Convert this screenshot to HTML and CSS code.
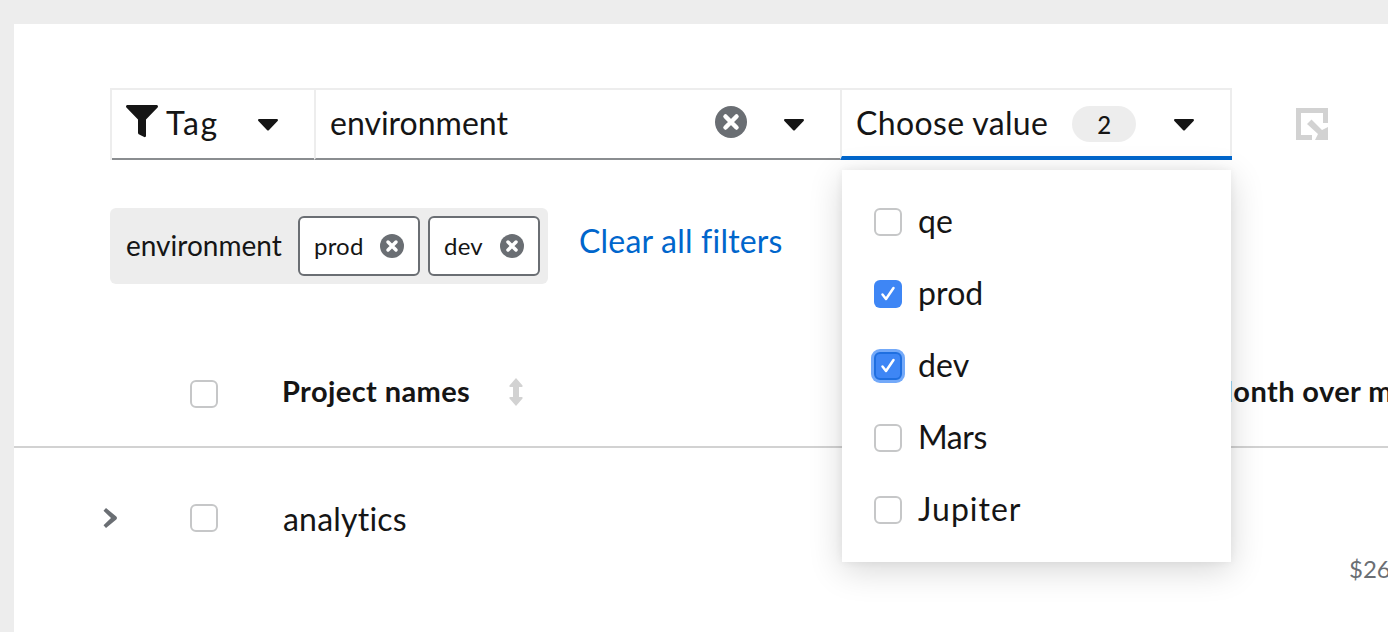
FILE: index.html
```html
<!DOCTYPE html>
<html lang="en">
<head>
<meta charset="utf-8">
<title>Filter</title>
<link rel="stylesheet" href="styles.css">
</head>
<body>
<main class="panel">
  <div class="toolbar-row">
    <div class="toolbar">
      <div class="seg seg-type">
        <svg class="funnel" viewBox="0 0 32 34"><path d="M0 1.500C0 .7.700 0 1.500 0h29c.8 0 1.500.7 1.500 1.500 0 .4-.2.8-.4 1L20 14.500V31c0 .8-1 1.500-1.800 1.100l-5-2.500c-.7-.4-1.200-1-1.200-1.800V14.500L.4 2.500C.2 2.300 0 1.900 0 1.500z"/></svg>
        <span class="seg-text tag">Tag</span>
        <svg class="caret caret-type" viewBox="0 0 20 12"><path d="M1.200 0h17.600c1 0 1.500 1.200.8 1.900l-8.800 9.300c-.4.500-1.200.5-1.600 0L.4 1.900C-.3 1.200.2 0 1.200 0z"/></svg>
      </div>
      <div class="seg seg-key">
        <span class="seg-text">environment</span>
        <svg class="clear-big" viewBox="0 0 32 32"><circle cx="16" cy="16" r="16"/><path class="x" d="M10.500 10.500l11 11m0-11l-11 11"/></svg>
        <svg class="caret caret-key" viewBox="0 0 20 12"><path d="M1.200 0h17.600c1 0 1.500 1.200.8 1.900l-8.800 9.300c-.4.500-1.200.5-1.600 0L.4 1.900C-.3 1.200.2 0 1.200 0z"/></svg>
      </div>
      <div class="seg seg-value">
        <span class="seg-text choose">Choose value</span>
        <span class="count">2</span>
        <svg class="caret caret-value" viewBox="0 0 20 12"><path d="M1.200 0h17.600c1 0 1.500 1.200.8 1.900l-8.800 9.300c-.4.500-1.200.5-1.600 0L.4 1.900C-.3 1.200.2 0 1.200 0z"/></svg>
      </div>
    </div>
    <svg class="export" viewBox="0 0 32 32"><path d="M0 0h32v15h-5V5H5v22h11v5H0z"/><path d="M11 16l4.500-4.500 10.500 10.500 6-3V32H19l3-6z"/></svg>
  </div>

  <div class="chips-row">
    <div class="chip-group">
      <span class="chip-label">environment</span>
      <span class="chip chip-prod">prod<svg class="chip-x" viewBox="0 0 24 24"><circle cx="12" cy="12" r="12"/><path class="x" d="M8 8l8 8m0-8l-8 8"/></svg></span>
      <span class="chip chip-dev">dev<svg class="chip-x" viewBox="0 0 24 24"><circle cx="12" cy="12" r="12"/><path class="x" d="M8 8l8 8m0-8l-8 8"/></svg></span>
    </div>
    <a class="clear-all">Clear all filters</a>
  </div>

  <div class="thead">
    <span class="check"></span>
    <span class="th-name">Project names</span>
    <svg class="sort" viewBox="0 0 16 28"><path d="M8 0l6.500 7.500c.4.500.1 1.500-.7 1.500H11v10h2.800c.8 0 1.100 1 .7 1.500L8 28l-6.500-7.500c-.4-.5-.1-1.500.7-1.500H5V9H2.200c-.8 0-1.100-1-.7-1.500z"/></svg>
    <span class="th-month">Month over month</span>
  </div>

  <div class="tbody-row">
    <svg class="chevron" viewBox="0 0 14 20"><path d="M3 0l10.300 8.500c.9.800.9 2.200 0 3L3 20l-2.500-2.800L8 10 .5 2.800z"/></svg>
    <span class="check"></span>
    <span class="td-name">analytics</span>
    <span class="td-cost">$26</span>
  </div>

  <div class="menu">
    <label class="item"><span class="check"></span><span class="item-text">qe</span></label>
    <label class="item"><span class="check on"><svg viewBox="0 0 20 20"><path d="M4.500 10.500l3.500 4.500 7.500-11"/></svg></span><span class="item-text">prod</span></label>
    <label class="item"><span class="check on focus"><svg viewBox="0 0 20 20"><path d="M4.500 10.500l3.500 4.500 7.500-11"/></svg></span><span class="item-text">dev</span></label>
    <label class="item"><span class="check"></span><span class="item-text mars">Mars</span></label>
    <label class="item"><span class="check"></span><span class="item-text jupiter">Jupiter</span></label>
  </div>
</main>
</body>
</html>
```
FILE: styles.css
```css
* { box-sizing: border-box; }
html, body { margin: 0; height: 100%; overflow: hidden; }
body {
  background: #ededed;
  padding: 24px 0 0 14px;
  font-family: "Lato", "Liberation Sans", sans-serif;
  color: #151515;
}
.panel {
  position: relative;
  width: 1374px;
  height: 608px;
  background: #fff;
  overflow: hidden;
}
.toolbar-row {
  display: flex;
  align-items: center;
  padding: 64px 0 0 96px;
}
.toolbar {
  display: flex;
  height: 72px;
  width: 1122px;
  border-top: 2px solid #ededed;
  border-left: 2px solid #ededed;
  border-right: 2px solid #ededed;
}
.seg {
  display: flex;
  align-items: center;
  height: 70px;
  padding-bottom: 4px;
  border-bottom: 2px solid #8a8d90;
  font-size: 32px;
}
.seg-type { width: 202px; padding-left: 14px; }
.seg-key { width: 526px; padding-left: 14px; border-left: 2px solid #ededed; }
.seg-value {
  flex: 1;
  padding-left: 14px;
  padding-bottom: 2px;
  border-left: 2px solid #ededed;
  border-bottom: 4px solid #06c;
  margin-right: -2px;
}
.funnel { width: 32px; height: 34px; fill: #151515; margin-right: 8px; }
.tag { letter-spacing: 1.700px; }
.choose { letter-spacing: .35px; }
.caret { width: 20px; height: 12px; fill: #151515; flex: none; margin-top: 5px; }
.caret-type { margin-left: 39px; }
.clear-big { width: 32px; height: 32px; margin-left: 207px; flex: none; fill: #6a6e73; }
.clear-big .x { stroke: #fff; stroke-width: 4.500; stroke-linecap: round; fill: none; }
.caret-key { margin-left: 37px; }
.count {
  width: 64px;
  height: 36px;
  margin: 4px 0 0 24px;
  border-radius: 18px;
  background: #ededed;
  font-size: 24px;
  font-weight: 500;
  display: flex;
  align-items: center;
  justify-content: center;
}
.caret-value { margin-left: 38px; }
.export { width: 32px; height: 32px; margin-left: 64px; fill: #d2d2d2; }

.chips-row {
  display: flex;
  align-items: center;
  margin: 48px 0 0 96px;
  gap: 31px;
}
.chip-group {
  display: flex;
  align-items: center;
  height: 76px;
  padding: 0 8px 0 16px;
  background: #ededed;
  border-radius: 6px;
  font-size: 28px;
}
.chip-label { width: 172px; padding-bottom: 2px; }
.chip {
  display: flex;
  align-items: center;
  justify-content: space-between;
  height: 60px;
  padding: 0 16px 2px 14px;
  margin-right: 8px;
  background: #fff;
  border: 2px solid #6a6e73;
  border-radius: 6px;
  font-size: 24px;
  letter-spacing: .2px;
}
.chip:last-child { margin-right: 0; }
.chip-prod { width: 122px; }
.chip-dev { width: 112px; }
.chip-x { width: 24px; height: 24px; fill: #6a6e73; margin: 2px -2px 0 0; }
.chip-x .x { stroke: #fff; stroke-width: 3.500; stroke-linecap: round; fill: none; }
.clear-all { color: #06c; font-size: 32px; letter-spacing: .2px; margin-bottom: 12px; }

.thead {
  display: flex;
  align-items: center;
  height: 164px;
  padding: 58px 0 0 176px;
  border-bottom: 2px solid #d2d2d2;
  font-size: 29px;
  font-weight: 700;
  letter-spacing: .4px;
}
.check {
  flex: none;
  display: block;
  width: 28px;
  height: 28px;
  border: 2px solid #c6c7c8;
  border-radius: 6px;
  background: #fff;
}
.th-name { flex: none; margin: 0 1px 8px 64px; width: 225px; white-space: nowrap; }
.sort { width: 16px; height: 28px; fill: #d2d2d2; flex: none; margin-bottom: 4px; }
.th-month { flex: none; margin: 0 0 8px 682px; white-space: nowrap; }
.tbody-row {
  position: relative;
  display: flex;
  align-items: center;
  height: 140px;
  padding-left: 89px;
  font-size: 32px;
}
.chevron { width: 14px; height: 20px; fill: #6a6e73; flex: none; margin-right: 73px; }
.td-name { margin-left: 65px; letter-spacing: .2px; }
.td-cost {
  position: absolute;
  left: 1335px;
  top: 106px;
  font-size: 24px;
  color: #6a6e73;
  white-space: nowrap;
}
.menu {
  position: absolute;
  left: 828px;
  top: 146px;
  width: 389px;
  height: 392px;
  padding: 16px 0;
  background: #fff;
  box-shadow: 0 8px 32px rgba(3,3,3,.16), 0 0 8px rgba(3,3,3,.06);
}
.item {
  display: flex;
  align-items: center;
  height: 72px;
  padding-left: 32px;
  gap: 16px;
  font-size: 32px;
}
.item-text { padding-bottom: 4px; letter-spacing: .1px; }
.mars { letter-spacing: -.4px; }
.jupiter { letter-spacing: 1px; }
.check.on {
  border: 0;
  background: #3e86f5;
  display: flex;
  align-items: center;
  justify-content: center;
}
.check svg { width: 20px; height: 20px; fill: none; stroke: #fff; stroke-width: 2.500; stroke-linecap: round; stroke-linejoin: round; }
.check.focus {
  border: 2px solid #1f6fe0;
  box-shadow: 0 0 0 3px #73a9f9;
}
```
